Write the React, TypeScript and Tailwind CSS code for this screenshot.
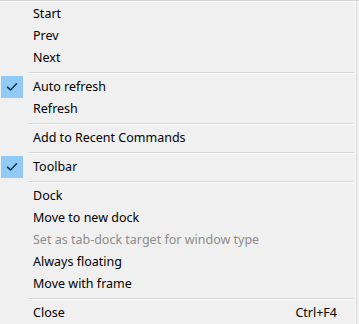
import React from "react";

type Item =
  | { type: "sep" }
  | { type: "item"; label: string; checked?: boolean; disabled?: boolean; shortcut?: string };

const items: Item[] = [
  { type: "item", label: "Start" },
  { type: "item", label: "Prev" },
  { type: "item", label: "Next" },
  { type: "sep" },
  { type: "item", label: "Auto refresh", checked: true },
  { type: "item", label: "Refresh" },
  { type: "sep" },
  { type: "item", label: "Add to Recent Commands" },
  { type: "sep" },
  { type: "item", label: "Toolbar", checked: true },
  { type: "sep" },
  { type: "item", label: "Dock" },
  { type: "item", label: "Move to new dock" },
  { type: "item", label: "Set as tab-dock target for window type", disabled: true },
  { type: "item", label: "Always floating" },
  { type: "item", label: "Move with frame" },
  { type: "sep" },
  { type: "item", label: "Close", shortcut: "Ctrl+F4" },
];

function Check() {
  return (
    <svg width="12" height="10" viewBox="0 0 12 10" fill="none">
      <path d="M1.5 5.2 L4.5 8 L10.5 1.8" stroke="#1f3550" strokeWidth="1.6" strokeLinecap="round" strokeLinejoin="round" />
    </svg>
  );
}

export default function App() {
  return (
    <div
      className="relative w-[359px] h-[324px] overflow-hidden bg-[#f0f0f0] text-[12.5px] text-black"
      style={{ fontFamily: '"Noto Sans", "Open Sans", sans-serif' }}
    >
      <div className="h-px bg-[#d6d6d6]" />
      <div className="h-px bg-[#fafafa]" />
      <div className="absolute right-[2px] top-[1px] bottom-0 w-px bg-[#d9d9d9]" />
      <div className="absolute right-[3px] top-[1px] bottom-0 w-px bg-[#fbfbfb]" />
      <div className="pt-px pr-[6px]">
        {items.map((it, i) =>
          it.type === "sep" ? (
            <div key={i} className="h-[7px] flex flex-col justify-center pl-[28px]">
              <div className="h-px bg-[#d7d7d7]" />
              <div className="h-px bg-white" />
            </div>
          ) : (
            <div key={i} className="h-[22px] flex items-center">
              <div className="w-[33px] h-full flex items-center pl-px">
                {it.checked && (
                  <div className="w-[22px] h-[22px] bg-[#91c9f7] flex items-center justify-center">
                    <Check />
                  </div>
                )}
              </div>
              <span className={it.disabled ? "text-[#8d8d8d]" : ""}>{it.label}</span>
              {it.shortcut && <span className="ml-auto mr-[16px]">{it.shortcut}</span>}
            </div>
          )
        )}
      </div>
    </div>
  );
}
